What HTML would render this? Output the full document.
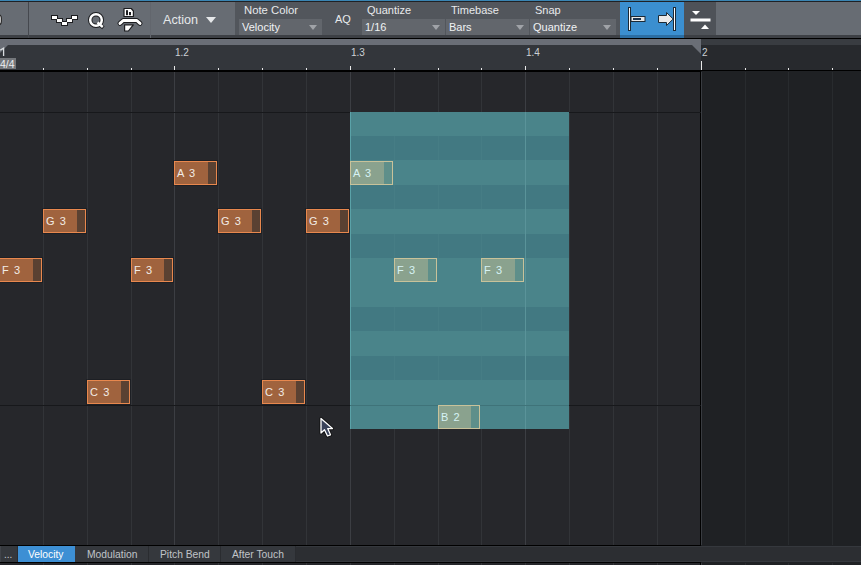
<!DOCTYPE html><html><head><meta charset="utf-8"><style>
*{margin:0;padding:0;box-sizing:border-box}
html,body{width:861px;height:565px;overflow:hidden;background:#26272b}
body{position:relative;font-family:"Liberation Sans",sans-serif;}
.r{position:absolute}
.t{position:absolute;white-space:nowrap;line-height:1}
</style></head><body>
<div class="r" style="left:0px;top:0px;width:861px;height:1px;background:#3a85b3;"></div>
<div class="r" style="left:0px;top:1px;width:861px;height:1px;background:#1f2125;"></div>
<div class="r" style="left:0px;top:2px;width:861px;height:33px;background:#676c73;"></div>
<div class="r" style="left:0px;top:35px;width:861px;height:3px;background:#3d4045;"></div>
<div class="r" style="left:0px;top:38px;width:861px;height:1px;background:#000;"></div>
<div class="r" style="left:28px;top:2px;width:1px;height:36px;background:#45484e;"></div>
<div class="r" style="left:150px;top:2px;width:1px;height:36px;background:#62666d;"></div>
<svg class="r" style="left:0;top:0" width="861" height="39"><rect x="-7" y="14.5" width="8.3" height="10.5" rx="3.5" fill="#fff" stroke="#222" stroke-width="1.2"/></svg>
<svg class="r" style="left:0;top:0" width="240" height="39" shape-rendering="crispEdges"><rect x="51" y="15" width="7" height="5" fill="#1c1d20"/><rect x="56" y="18" width="7" height="5" fill="#1c1d20"/><rect x="61" y="21" width="7" height="5" fill="#1c1d20"/><rect x="66" y="18" width="7" height="5" fill="#1c1d20"/><rect x="71" y="15" width="7" height="5" fill="#1c1d20"/><rect x="52" y="16" width="5" height="3" fill="#fff"/><rect x="57" y="19" width="5" height="3" fill="#fff"/><rect x="62" y="22" width="5" height="3" fill="#fff"/><rect x="67" y="19" width="5" height="3" fill="#fff"/><rect x="72" y="16" width="5" height="3" fill="#fff"/></svg>
<svg class="r" style="left:0;top:0" width="240" height="39"><circle cx="96" cy="20" r="5.8" fill="none" stroke="#1c1d20" stroke-width="4.4"/><path d="M99.5 24.5 L103.4 27.8" stroke="#1c1d20" stroke-width="3.8"/><circle cx="96" cy="20" r="5.8" fill="none" stroke="#fff" stroke-width="2.5"/><path d="M97.5 22.5 L102.8 27" stroke="#fff" stroke-width="2.4"/><path d="M124 8.5 H131.3 L133.4 11 V16.5 H124 Z" fill="#fff" stroke="#1c1d20" stroke-width="1.2" stroke-linejoin="round"/><rect x="126" y="10.2" width="2" height="5" fill="#1c1d20"/><rect x="129" y="12" width="2" height="3.2" fill="#1c1d20"/><path d="M120 23.4 L123.2 20.5 H136.8 L140 23.4" fill="none" stroke="#1c1d20" stroke-width="5" stroke-linejoin="round" stroke-linecap="round"/><path d="M120 23.4 L123.2 20.5 H136.8 L140 23.4" fill="none" stroke="#fff" stroke-width="3" stroke-linejoin="round" stroke-linecap="round"/><path d="M124.6 24.8 H133.3 L128.4 31 H124.6 Z" fill="#fff" stroke="#1c1d20" stroke-width="1.2" stroke-linejoin="round"/></svg>
<div class="t" style="left:163px;top:14px;font-size:12.6px;color:#e6e8ea;">Action</div>
<svg class="r" style="left:205px;top:16px" width="12" height="8"><path d="M1 1 H11 L6 7 Z" fill="#e6e8ea"/></svg>
<div class="r" style="left:235px;top:2px;width:385px;height:33px;background:#52565c;"></div>
<div class="r" style="left:239px;top:19px;width:83px;height:16px;background:#62666c;"></div>
<svg class="r" style="left:309px;top:25px" width="9" height="6"><path d="M0 0 H8 L4 5 Z" fill="#a0a3a8"/></svg>
<div class="r" style="left:362px;top:19px;width:83px;height:16px;background:#62666c;"></div>
<svg class="r" style="left:432px;top:25px" width="9" height="6"><path d="M0 0 H8 L4 5 Z" fill="#a0a3a8"/></svg>
<div class="r" style="left:446px;top:19px;width:83px;height:16px;background:#62666c;"></div>
<svg class="r" style="left:516px;top:25px" width="9" height="6"><path d="M0 0 H8 L4 5 Z" fill="#a0a3a8"/></svg>
<div class="r" style="left:530px;top:19px;width:86px;height:16px;background:#62666c;"></div>
<svg class="r" style="left:603px;top:25px" width="9" height="6"><path d="M0 0 H8 L4 5 Z" fill="#a0a3a8"/></svg>
<div class="t" style="left:244px;top:5px;font-size:11.3px;color:#e8eaec;">Note Color</div>
<div class="t" style="left:242px;top:22px;font-size:11px;color:#f0f2f4;">Velocity</div>
<div class="t" style="left:335px;top:14px;font-size:11px;color:#e8eaec;">AQ</div>
<div class="t" style="left:367px;top:5px;font-size:11px;color:#e8eaec;">Quantize</div>
<div class="t" style="left:365px;top:22px;font-size:11px;color:#f0f2f4;">1/16</div>
<div class="t" style="left:451px;top:5px;font-size:11px;color:#e8eaec;">Timebase</div>
<div class="t" style="left:449px;top:22px;font-size:11px;color:#f0f2f4;">Bars</div>
<div class="t" style="left:535px;top:5px;font-size:11px;color:#e8eaec;">Snap</div>
<div class="t" style="left:533px;top:22px;font-size:11px;color:#f0f2f4;">Quantize</div>
<div class="r" style="left:620px;top:2px;width:64px;height:33px;background:#3b8fd0;"></div>
<div class="r" style="left:620px;top:35px;width:64px;height:3px;background:#2c6ea3;"></div>
<div class="r" style="left:684px;top:2px;width:32px;height:33px;background:#4e5258;"></div>
<svg class="r" style="left:600px;top:0" width="130" height="39"><rect x="28.5" y="7.5" width="2" height="23" fill="#fff" stroke="#1c2a36" stroke-width="1"/><rect x="31" y="16.5" width="14" height="5" fill="#eaeaea" stroke="#1c2a36" stroke-width="1"/><rect x="33" y="18" width="8" height="2" fill="#1c3550"/><path d="M58.5 15.5 H66.5 V12.5 L73.2 19 L66.5 25.5 V22.5 H58.5 Z" fill="#eaeaea" stroke="#1c2a36" stroke-width="1"/><rect x="73.5" y="7.5" width="2" height="23" fill="#fff" stroke="#1c2a36" stroke-width="1"/><path d="M92 11 H100 L96 15 Z" fill="#fff"/><rect x="90.5" y="18.5" width="20" height="3" fill="#fff"/><path d="M101 29 H109 L105 24.5 Z" fill="#fff"/></svg>
<div class="r" style="left:0px;top:39px;width:861px;height:31px;background:#33363b;"></div>
<svg class="r" style="left:0;top:39px" width="861" height="31"><path d="M0 0 H701 V15 L692 6 H8 L0 14 Z" fill="#6a6e76"/><rect x="701" y="0" width="160" height="6" fill="#393c41"/><rect x="701" y="6" width="160" height="25" fill="#27292d"/></svg>
<div class="r" style="left:0px;top:58px;width:16px;height:11px;background:#74777b;"></div>
<div class="t" style="left:0px;top:59px;font-size:10.5px;color:#eceef0;">4/4</div>
<svg class="r" style="left:0;top:46px" width="8" height="12"><path d="M0.3 4.2 L3.6 2.2 V10" fill="none" stroke="#d8dcdf" stroke-width="1.3"/></svg>
<div class="t" style="left:175px;top:48px;font-size:10px;color:#ccd0d4;">1.2</div>
<div class="t" style="left:351px;top:48px;font-size:10px;color:#ccd0d4;">1.3</div>
<div class="t" style="left:526px;top:48px;font-size:10px;color:#ccd0d4;">1.4</div>
<div class="t" style="left:702px;top:48px;font-size:10px;color:#ccd0d4;">2</div>
<div class="r" style="left:43px;top:68px;width:1px;height:2px;background:#e8e8e8;"></div>
<div class="r" style="left:87px;top:68px;width:1px;height:2px;background:#e8e8e8;"></div>
<div class="r" style="left:131px;top:68px;width:1px;height:2px;background:#e8e8e8;"></div>
<div class="r" style="left:174px;top:66px;width:1px;height:4px;background:#e8e8e8;"></div>
<div class="r" style="left:218px;top:68px;width:1px;height:2px;background:#e8e8e8;"></div>
<div class="r" style="left:262px;top:68px;width:1px;height:2px;background:#e8e8e8;"></div>
<div class="r" style="left:306px;top:68px;width:1px;height:2px;background:#e8e8e8;"></div>
<div class="r" style="left:350px;top:66px;width:1px;height:4px;background:#e8e8e8;"></div>
<div class="r" style="left:394px;top:68px;width:1px;height:2px;background:#e8e8e8;"></div>
<div class="r" style="left:438px;top:68px;width:1px;height:2px;background:#e8e8e8;"></div>
<div class="r" style="left:481px;top:68px;width:1px;height:2px;background:#e8e8e8;"></div>
<div class="r" style="left:525px;top:66px;width:1px;height:4px;background:#e8e8e8;"></div>
<div class="r" style="left:569px;top:68px;width:1px;height:2px;background:#e8e8e8;"></div>
<div class="r" style="left:613px;top:68px;width:1px;height:2px;background:#e8e8e8;"></div>
<div class="r" style="left:657px;top:68px;width:1px;height:2px;background:#e8e8e8;"></div>
<div class="r" style="left:701px;top:61px;width:1px;height:9px;background:#e8e8e8;"></div>
<div class="r" style="left:745px;top:68px;width:1px;height:2px;background:#e8e8e8;"></div>
<div class="r" style="left:788px;top:68px;width:1px;height:2px;background:#e8e8e8;"></div>
<div class="r" style="left:832px;top:68px;width:1px;height:2px;background:#e8e8e8;"></div>
<div class="r" style="left:0px;top:70px;width:701px;height:2px;background:#000;"></div>
<div class="r" style="left:701px;top:70px;width:160px;height:1px;background:#000;"></div>
<div class="r" style="left:701px;top:71px;width:160px;height:474px;background:#1f2124;"></div>
<div class="r" style="left:43px;top:72px;width:1px;height:473px;background:#323438;"></div>
<div class="r" style="left:87px;top:72px;width:1px;height:473px;background:#323438;"></div>
<div class="r" style="left:131px;top:72px;width:1px;height:473px;background:#323438;"></div>
<div class="r" style="left:174px;top:72px;width:1px;height:473px;background:#3c3e43;"></div>
<div class="r" style="left:218px;top:72px;width:1px;height:473px;background:#323438;"></div>
<div class="r" style="left:262px;top:72px;width:1px;height:473px;background:#323438;"></div>
<div class="r" style="left:306px;top:72px;width:1px;height:473px;background:#323438;"></div>
<div class="r" style="left:350px;top:72px;width:1px;height:473px;background:#3c3e43;"></div>
<div class="r" style="left:394px;top:72px;width:1px;height:473px;background:#323438;"></div>
<div class="r" style="left:438px;top:72px;width:1px;height:473px;background:#323438;"></div>
<div class="r" style="left:481px;top:72px;width:1px;height:473px;background:#323438;"></div>
<div class="r" style="left:525px;top:72px;width:1px;height:473px;background:#3c3e43;"></div>
<div class="r" style="left:569px;top:72px;width:1px;height:473px;background:#323438;"></div>
<div class="r" style="left:613px;top:72px;width:1px;height:473px;background:#323438;"></div>
<div class="r" style="left:657px;top:72px;width:1px;height:473px;background:#323438;"></div>
<div class="r" style="left:700px;top:72px;width:1px;height:473px;background:#000;"></div>
<div class="r" style="left:701px;top:72px;width:1px;height:473px;background:#393c41;"></div>
<div class="r" style="left:745px;top:72px;width:1px;height:473px;background:#282b2e;"></div>
<div class="r" style="left:788px;top:72px;width:1px;height:473px;background:#282b2e;"></div>
<div class="r" style="left:832px;top:72px;width:1px;height:473px;background:#282b2e;"></div>
<div class="r" style="left:0px;top:112px;width:701px;height:1px;background:#17181b;"></div>
<div class="r" style="left:0px;top:405px;width:701px;height:1px;background:#17181b;"></div>
<div class="r" style="left:350px;top:112px;width:219px;height:317px;background:#4a848a;"></div>
<div class="r" style="left:350px;top:136px;width:219px;height:24px;background:#427982;"></div>
<div class="r" style="left:394px;top:136px;width:1px;height:24px;background:#467d85;"></div>
<div class="r" style="left:438px;top:136px;width:1px;height:24px;background:#467d85;"></div>
<div class="r" style="left:481px;top:136px;width:1px;height:24px;background:#467d85;"></div>
<div class="r" style="left:350px;top:185px;width:219px;height:24px;background:#427982;"></div>
<div class="r" style="left:394px;top:185px;width:1px;height:24px;background:#467d85;"></div>
<div class="r" style="left:438px;top:185px;width:1px;height:24px;background:#467d85;"></div>
<div class="r" style="left:481px;top:185px;width:1px;height:24px;background:#467d85;"></div>
<div class="r" style="left:350px;top:234px;width:219px;height:24px;background:#427982;"></div>
<div class="r" style="left:394px;top:234px;width:1px;height:24px;background:#467d85;"></div>
<div class="r" style="left:438px;top:234px;width:1px;height:24px;background:#467d85;"></div>
<div class="r" style="left:481px;top:234px;width:1px;height:24px;background:#467d85;"></div>
<div class="r" style="left:350px;top:307px;width:219px;height:24px;background:#427982;"></div>
<div class="r" style="left:394px;top:307px;width:1px;height:24px;background:#467d85;"></div>
<div class="r" style="left:438px;top:307px;width:1px;height:24px;background:#467d85;"></div>
<div class="r" style="left:481px;top:307px;width:1px;height:24px;background:#467d85;"></div>
<div class="r" style="left:350px;top:356px;width:219px;height:24px;background:#427982;"></div>
<div class="r" style="left:394px;top:356px;width:1px;height:24px;background:#467d85;"></div>
<div class="r" style="left:438px;top:356px;width:1px;height:24px;background:#467d85;"></div>
<div class="r" style="left:481px;top:356px;width:1px;height:24px;background:#467d85;"></div>
<div class="r" style="left:525px;top:112px;width:1px;height:317px;background:#5a9399;"></div>
<div class="r" style="left:350px;top:112px;width:1px;height:317px;background:#5aa2a8;"></div>
<div class="r" style="left:350px;top:405px;width:219px;height:1px;background:#3f7379;"></div>
<div class="r" style="left:-2px;top:257px;width:45px;height:26px;background:rgba(15,18,22,0.35);"></div>
<div class="r" style="left:-1px;top:258px;width:43px;height:24px;background:#e8884e;"></div>
<div class="r" style="left:0px;top:259px;width:41px;height:22px;background:#a0633e;"></div>
<div class="r" style="left:33px;top:259px;width:8px;height:22px;background:#5a4132;"></div>
<div class="t" style="left:2px;top:265px;font-size:11px;color:#f2ece6;letter-spacing:1.1px">F 3</div>
<div class="r" style="left:42px;top:208px;width:45px;height:26px;background:rgba(15,18,22,0.35);"></div>
<div class="r" style="left:43px;top:209px;width:43px;height:24px;background:#e8884e;"></div>
<div class="r" style="left:44px;top:210px;width:41px;height:22px;background:#a0633e;"></div>
<div class="r" style="left:77px;top:210px;width:8px;height:22px;background:#5a4132;"></div>
<div class="t" style="left:46px;top:216px;font-size:11px;color:#f2ece6;letter-spacing:1.1px">G 3</div>
<div class="r" style="left:86px;top:379px;width:45px;height:26px;background:rgba(15,18,22,0.35);"></div>
<div class="r" style="left:87px;top:380px;width:43px;height:24px;background:#e8884e;"></div>
<div class="r" style="left:88px;top:381px;width:41px;height:22px;background:#a0633e;"></div>
<div class="r" style="left:121px;top:381px;width:8px;height:22px;background:#5a4132;"></div>
<div class="t" style="left:90px;top:387px;font-size:11px;color:#f2ece6;letter-spacing:1.1px">C 3</div>
<div class="r" style="left:130px;top:257px;width:44px;height:26px;background:rgba(15,18,22,0.35);"></div>
<div class="r" style="left:131px;top:258px;width:42px;height:24px;background:#e8884e;"></div>
<div class="r" style="left:132px;top:259px;width:40px;height:22px;background:#a0633e;"></div>
<div class="r" style="left:164px;top:259px;width:8px;height:22px;background:#5a4132;"></div>
<div class="t" style="left:134px;top:265px;font-size:11px;color:#f2ece6;letter-spacing:1.1px">F 3</div>
<div class="r" style="left:173px;top:160px;width:45px;height:26px;background:rgba(15,18,22,0.35);"></div>
<div class="r" style="left:174px;top:161px;width:43px;height:24px;background:#e8884e;"></div>
<div class="r" style="left:175px;top:162px;width:41px;height:22px;background:#a0633e;"></div>
<div class="r" style="left:208px;top:162px;width:8px;height:22px;background:#5a4132;"></div>
<div class="t" style="left:177px;top:168px;font-size:11px;color:#f2ece6;letter-spacing:1.1px">A 3</div>
<div class="r" style="left:217px;top:208px;width:45px;height:26px;background:rgba(15,18,22,0.35);"></div>
<div class="r" style="left:218px;top:209px;width:43px;height:24px;background:#e8884e;"></div>
<div class="r" style="left:219px;top:210px;width:41px;height:22px;background:#a0633e;"></div>
<div class="r" style="left:252px;top:210px;width:8px;height:22px;background:#5a4132;"></div>
<div class="t" style="left:221px;top:216px;font-size:11px;color:#f2ece6;letter-spacing:1.1px">G 3</div>
<div class="r" style="left:261px;top:379px;width:45px;height:26px;background:rgba(15,18,22,0.35);"></div>
<div class="r" style="left:262px;top:380px;width:43px;height:24px;background:#e8884e;"></div>
<div class="r" style="left:263px;top:381px;width:41px;height:22px;background:#a0633e;"></div>
<div class="r" style="left:296px;top:381px;width:8px;height:22px;background:#5a4132;"></div>
<div class="t" style="left:265px;top:387px;font-size:11px;color:#f2ece6;letter-spacing:1.1px">C 3</div>
<div class="r" style="left:305px;top:208px;width:45px;height:26px;background:rgba(15,18,22,0.35);"></div>
<div class="r" style="left:306px;top:209px;width:43px;height:24px;background:#e8884e;"></div>
<div class="r" style="left:307px;top:210px;width:41px;height:22px;background:#a0633e;"></div>
<div class="r" style="left:340px;top:210px;width:8px;height:22px;background:#5a4132;"></div>
<div class="t" style="left:309px;top:216px;font-size:11px;color:#f2ece6;letter-spacing:1.1px">G 3</div>
<div class="r" style="left:350px;top:161px;width:43px;height:24px;background:#c8c29a;"></div>
<div class="r" style="left:351px;top:162px;width:41px;height:22px;background:#8aa28e;"></div>
<div class="r" style="left:384px;top:162px;width:8px;height:22px;background:#5e8f8a;"></div>
<div class="t" style="left:353px;top:168px;font-size:11px;color:#d6f2f4;letter-spacing:1.1px">A 3</div>
<div class="r" style="left:394px;top:258px;width:43px;height:24px;background:#c8c29a;"></div>
<div class="r" style="left:395px;top:259px;width:41px;height:22px;background:#8aa28e;"></div>
<div class="r" style="left:428px;top:259px;width:8px;height:22px;background:#5e8f8a;"></div>
<div class="t" style="left:397px;top:265px;font-size:11px;color:#d6f2f4;letter-spacing:1.1px">F 3</div>
<div class="r" style="left:481px;top:258px;width:43px;height:24px;background:#c8c29a;"></div>
<div class="r" style="left:482px;top:259px;width:41px;height:22px;background:#8aa28e;"></div>
<div class="r" style="left:515px;top:259px;width:8px;height:22px;background:#5e8f8a;"></div>
<div class="t" style="left:484px;top:265px;font-size:11px;color:#d6f2f4;letter-spacing:1.1px">F 3</div>
<div class="r" style="left:438px;top:405px;width:42px;height:24px;background:#c8c29a;"></div>
<div class="r" style="left:439px;top:406px;width:40px;height:22px;background:#8aa28e;"></div>
<div class="r" style="left:471px;top:406px;width:8px;height:22px;background:#5e8f8a;"></div>
<div class="t" style="left:441px;top:412px;font-size:11px;color:#d6f2f4;letter-spacing:1.1px">B 2</div>
<svg class="r" style="left:315px;top:414px" width="24" height="26"><path d="M6 4.5 V19 L9.5 15.8 L12.5 22 L15.5 20.8 L12.7 14.6 H17.5 Z" fill="none" stroke="rgba(0,0,0,0.55)" stroke-width="3.2" stroke-linejoin="round"/><path d="M6 4.5 V19 L9.5 15.8 L12.5 22 L15.5 20.8 L12.7 14.6 H17.5 Z" fill="#39425a" stroke="#fff" stroke-width="1.3" stroke-linejoin="round"/></svg>
<div class="r" style="left:0px;top:545px;width:701px;height:1px;background:#000;"></div>
<div class="r" style="left:701px;top:545px;width:160px;height:1px;background:#1f2124;"></div>
<div class="r" style="left:0px;top:546px;width:861px;height:16px;background:#2c2e32;"></div>
<div class="r" style="left:0px;top:546px;width:861px;height:1px;background:#35383d;"></div>
<div class="r" style="left:0px;top:561px;width:861px;height:1px;background:#35383d;"></div>
<div class="r" style="left:0px;top:546px;width:296px;height:16px;background:#35383d;"></div>
<div class="r" style="left:0px;top:546px;width:1px;height:16px;background:#404349;"></div>
<div class="r" style="left:17px;top:546px;width:1px;height:16px;background:#2a2c30;"></div>
<div class="r" style="left:18px;top:546px;width:57px;height:16px;background:#3d8fd4;"></div>
<div class="r" style="left:148px;top:546px;width:1px;height:16px;background:#2a2c30;"></div>
<div class="r" style="left:220px;top:546px;width:1px;height:16px;background:#2a2c30;"></div>
<div class="r" style="left:295px;top:546px;width:1px;height:16px;background:#2a2c30;"></div>
<div class="t" style="left:4px;top:550px;font-size:10px;color:#c8ccd0;">...</div>
<div class="t" style="left:28px;top:550px;font-size:10.3px;color:#ffffff;">Velocity</div>
<div class="t" style="left:87px;top:550px;font-size:10.3px;color:#c0c4c8;">Modulation</div>
<div class="t" style="left:160px;top:550px;font-size:10.3px;color:#c0c4c8;">Pitch Bend</div>
<div class="t" style="left:232px;top:550px;font-size:10.3px;color:#c0c4c8;">After Touch</div>
<div class="r" style="left:0px;top:562px;width:701px;height:1px;background:#000;"></div>
<div class="r" style="left:701px;top:562px;width:160px;height:1px;background:#1f2124;"></div>
<div class="r" style="left:0px;top:563px;width:701px;height:2px;background:#26272b;"></div>
<div class="r" style="left:701px;top:563px;width:160px;height:2px;background:#1f2124;"></div>
<div class="r" style="left:43px;top:563px;width:1px;height:2px;background:#34363a;"></div>
<div class="r" style="left:87px;top:563px;width:1px;height:2px;background:#34363a;"></div>
<div class="r" style="left:131px;top:563px;width:1px;height:2px;background:#34363a;"></div>
<div class="r" style="left:174px;top:563px;width:1px;height:2px;background:#34363a;"></div>
<div class="r" style="left:218px;top:563px;width:1px;height:2px;background:#34363a;"></div>
<div class="r" style="left:262px;top:563px;width:1px;height:2px;background:#34363a;"></div>
<div class="r" style="left:306px;top:563px;width:1px;height:2px;background:#34363a;"></div>
<div class="r" style="left:350px;top:563px;width:1px;height:2px;background:#34363a;"></div>
<div class="r" style="left:394px;top:563px;width:1px;height:2px;background:#34363a;"></div>
<div class="r" style="left:438px;top:563px;width:1px;height:2px;background:#34363a;"></div>
<div class="r" style="left:481px;top:563px;width:1px;height:2px;background:#34363a;"></div>
<div class="r" style="left:525px;top:563px;width:1px;height:2px;background:#34363a;"></div>
<div class="r" style="left:569px;top:563px;width:1px;height:2px;background:#34363a;"></div>
<div class="r" style="left:613px;top:563px;width:1px;height:2px;background:#34363a;"></div>
<div class="r" style="left:657px;top:563px;width:1px;height:2px;background:#34363a;"></div>
<div class="r" style="left:700px;top:563px;width:1px;height:2px;background:#000;"></div>
<div class="r" style="left:701px;top:563px;width:1px;height:2px;background:#393c41;"></div>
<div class="r" style="left:745px;top:563px;width:1px;height:2px;background:#2a2c30;"></div>
<div class="r" style="left:788px;top:563px;width:1px;height:2px;background:#2a2c30;"></div>
<div class="r" style="left:832px;top:563px;width:1px;height:2px;background:#2a2c30;"></div>
</body></html>
